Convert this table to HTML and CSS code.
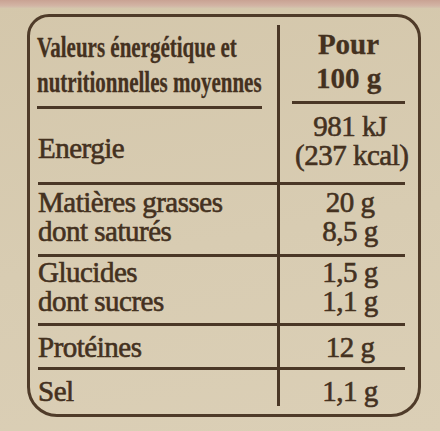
FILE: index.html
```html
<!DOCTYPE html>
<html lang="fr">
<head>
<meta charset="utf-8">
<title>Valeurs nutritionnelles</title>
<link rel="stylesheet" href="styles.css">
</head>
<body>
<div class="strip"></div>
<div class="label">
  <div class="row">
    <div class="cell head-left">
      <div class="head-text">
        <div><span class="cond">Valeurs énergétique et</span></div>
        <div><span class="cond">nutritionnelles moyennes</span></div>
      </div>
    </div>
    <div class="cell right head-right">
      <div class="head-r">
        <div>Pour</div>
        <div>100 g</div>
      </div>
    </div>
  </div>
  <div class="row ruled r-energy">
    <div class="cell energy-left">Energie</div>
    <div class="cell right val energy-right">
      <div>981 kJ</div>
      <div>(237 kcal)</div>
    </div>
  </div>
  <div class="row ruled r-fat">
    <div class="cell">
      <div>Matières grasses</div>
      <div>dont saturés</div>
    </div>
    <div class="cell right val">
      <div>20 g</div>
      <div>8,5 g</div>
    </div>
  </div>
  <div class="row ruled r-carb">
    <div class="cell">
      <div>Glucides</div>
      <div>dont sucres</div>
    </div>
    <div class="cell right val">
      <div>1,5 g</div>
      <div>1,1 g</div>
    </div>
  </div>
  <div class="row ruled r-prot">
    <div class="cell">Protéines</div>
    <div class="cell right val">12 g</div>
  </div>
  <div class="row r-salt">
    <div class="cell">Sel</div>
    <div class="cell right val">1,1 g</div>
  </div>
</div>
</body>
</html>
```

FILE: styles.css
```css
html, body {
  margin: 0;
  padding: 0;
}
body {
  width: 440px;
  height: 431px;
  overflow: hidden;
  background: linear-gradient(170deg, #d4c7ab 0%, #d8ccb2 55%, #dbcfb6 100%);
  font-family: "Liberation Serif", "Times New Roman", serif;
  font-size: 29px;
  letter-spacing: -0.5px;
  color: #44311f;
  -webkit-text-stroke: 0.6px #44311f;
}
.strip {
  height: 8px;
  background: linear-gradient(to bottom, #c9a293, #d2b4a4 70%, #d4c3ad);
}
.label {
  box-sizing: border-box;
  margin: 6px 0 0 27px;
  width: 394px;
  height: 403px;
  border: 3px solid #4f3b29;
  border-radius: 22px 24px 30px 30px;
  padding: 8px 13px 14px 8px;
}
.row {
  display: grid;
  grid-template-columns: 239px 128px;
}
.ruled {
  border-bottom: 3px solid #4a3726;
}
.cell {
  line-height: 29px;
  white-space: nowrap;
}
.right {
  border-left: 3px solid #4a3726;
}
.val {
  text-align: center;
  padding-left: 15px;
}
.head-left {
  padding-top: 4px;
}
.head-text {
  font-size: 30px;
  letter-spacing: 0;
  line-height: 35px;
  font-weight: bold;
  -webkit-text-stroke: 0.3px #44311f;
  padding-bottom: 7px;
  border-bottom: 3px solid #4a3726;
  margin-right: 15px;
  margin-left: -1px;
}
.cond {
  display: inline-block;
  transform: scaleX(0.7);
  transform-origin: left center;
}
.head-right {
  padding-top: 2px;
}
.head-r {
  line-height: 34px;
  font-weight: bold;
  letter-spacing: 0;
  -webkit-text-stroke: 0.3px #44311f;
  text-align: center;
  padding-bottom: 6px;
  border-bottom: 3px solid #4a3726;
  margin-left: 12px;
}
.energy-left {
  line-height: 28px;
  padding-top: 25px;
  padding-bottom: 20px;
}
.energy-right {
  line-height: 29px;
  padding-top: 3px;
}
.r-fat .cell {
  padding-top: 3px;
  padding-bottom: 8px;
}
.r-carb .cell {
  padding-top: 1px;
  padding-bottom: 7px;
}
.r-prot .cell {
  padding-top: 7px;
  padding-bottom: 5px;
}
.r-salt {
  height: 30px;
}
.r-salt .cell {
  padding-top: 7px;
}
```
